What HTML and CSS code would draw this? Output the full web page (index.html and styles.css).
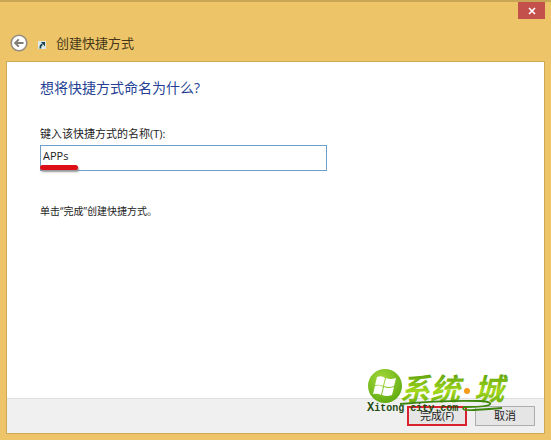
FILE: index.html
```html
<!DOCTYPE html>
<html lang="zh-CN">
<head>
  <meta charset="UTF-8">
  <meta name="viewport" content="width=device-width, initial-scale=1.0">
  <title>创建快捷方式</title>
  <link rel="stylesheet" href="styles.css">
</head>
<body>
  <form class="window">
    <div class="titlebar">
      <button type="button" class="close" aria-label="关闭">
        <svg width="8" height="8" viewBox="0 0 8 8"><path d="M1 1l6 6M7 1L1 7" stroke="#fff" stroke-width="1.6"/></svg>
      </button>
    </div>

    <header class="header">
      <button type="button" class="back" aria-label="返回">
        <svg width="18" height="18" viewBox="0 0 18 18">
          <circle cx="9" cy="9" r="7.8" fill="#fff" stroke="#948d80" stroke-width="1.6"/>
          <path d="M13.5 9H5.5M8.8 5.4L5.2 9l3.6 3.6" fill="none" stroke="#807d77" stroke-width="2"/>
        </svg>
      </button>
      <svg class="shortcut" width="8" height="8" viewBox="0 0 8 8">
        <rect width="8" height="8" fill="#dfe8e8"/>
        <path d="M2.5 7.5C2 5 3 3.5 4.5 3.500" fill="none" stroke="#17414f" stroke-width="1.800"/>
        <path d="M3 1H7v4.500z" fill="#17414f"/>
      </svg>
      <span class="title">创建快捷方式</span>
    </header>

    <main class="panel">
      <div class="content">
        <h1>想将快捷方式命名为什么?</h1>
        <label for="name">键入该快捷方式的名称(T):</label>
        <div class="field">
          <input type="text" id="name" value="APPs">
          <span class="marker"></span>
        </div>
        <p>单击“完成”创建快捷方式。</p>
      </div>

      <footer class="footer">
        <button type="submit" class="btn finish">完成(F)</button>
        <button type="button" class="btn">取消</button>
        <!-- Logo -->
        <svg class="logo" width="146" height="52" viewBox="0 0 146 52">
          <defs>
            <linearGradient id="green" x1="0" y1="0" x2="0" y2="1">
              <stop offset="0.2" stop-color="#5fa30c"/>
              <stop offset="0.6" stop-color="#a4d81c"/>
              <stop offset="1" stop-color="#4f980a"/>
            </linearGradient>
            <radialGradient id="ball" cx="0.4" cy="0.3" r="0.7">
              <stop offset="0" stop-color="#a5d93b"/>
              <stop offset="1" stop-color="#62ad12"/>
            </radialGradient>
          </defs>
          <circle cx="21" cy="20" r="17" fill="url(#ball)"/>
          <path d="M13 11q5-2 8 1l-2 8q-3-2-8-1zM22 12q4 2 10 0l-2 8q-5 2-10 0zM11 20q5-2 8 1l-2 8q-3-2-8-1zM20 21q4 2 10 0l-2 8q-5 2-10 0z" fill="#fff"/>
          <g class="logo-name">
            <text x="36" y="34">系</text>
            <text x="66" y="34">统</text>
            <text x="110" y="34">城</text>
          </g>
          <circle cx="103" cy="25" r="3" fill="#f59a18"/>
          <path d="M36 38Q80 34 116 35Q130 36 125 39Q120 41 100 41Q96 45 110 44Q126 43 138 42" fill="none" stroke="#3c860e" stroke-width="1.8"/>
          <text class="logo-url" x="3" y="45"><tspan class="logo-cap">X</tspan>itong city.com</text>
        </svg>
      </footer>
    </main>
  </form>
</body>
</html>
```
FILE: styles.css
```css
* {
  box-sizing: border-box;
}
body {
  margin: 0;
  font-family: "Open Sans", "Noto Sans CJK SC", sans-serif;
  font-size: 11px;
  line-height: 16px;
  color: #222;
}
button, input {
  font: inherit;
  color: inherit;
}
.window {
  display: flex;
  flex-direction: column;
  min-height: 100vh;
  padding: 0 6px 6px;
  background-color: #edc568;
  border-top: 2px solid #c9a655;
}
.titlebar {
  display: flex;
  justify-content: flex-end;
  height: 31px;
}
.close {
  display: flex;
  align-items: center;
  justify-content: center;
  width: 27px;
  height: 17px;
  padding: 0;
  border: 0;
  background-color: #c4504c;
}
.header {
  display: flex;
  align-items: center;
  height: 20px;
  margin-bottom: 8px;
  padding-left: 4px;
}
.back {
  display: flex;
  padding: 0;
  border: 0;
  background: none;
}
.shortcut {
  margin: 4px 10px 0 10px;
}
.title {
  font-size: 13px;
  color: #453718;
}
.panel {
  flex: 1;
  display: flex;
  flex-direction: column;
  background-color: #fff;
  border: 1px solid #cda955;
}
.content {
  flex: 1;
  padding: 16px 33px;
}
h1 {
  margin: 0 0 28px;
  font-size: 14px;
  font-weight: normal;
  line-height: 20px;
  color: #253f94;
}
label {
  display: block;
  margin-bottom: 3px;
}
.field {
  position: relative;
  width: 61%;
  margin-bottom: 32px;
}
input {
  display: block;
  width: 100%;
  height: 26px;
  padding: 0 2px 6px;
  border: 1px solid #6f9fc9;
  outline: none;
}
.marker {
  position: absolute;
  left: 0;
  bottom: 1px;
  width: 38px;
  height: 5px;
  border-radius: 3px;
  background-color: #dc1016;
  box-shadow: 1px 2px 2px #999;
}
p {
  margin: 0;
  font-size: 10px;
}
.footer {
  position: relative;
  display: flex;
  justify-content: flex-end;
  gap: 8px;
  padding: 7px 9px;
  background-color: #f0f0f0;
  border-top: 1px solid #dfdfdf;
}
.btn {
  width: 60px;
  height: 20px;
  padding: 0;
  border: 1px solid #adadad;
  background-color: #e5e5e5;
  line-height: 16px;
}
.finish {
  border: 2px solid #d8232e;
}
.logo {
  position: absolute;
  right: 34px;
  bottom: 15px;
}
.logo-name {
  font-family: "Noto Sans CJK SC", sans-serif;
  font-size: 30px;
  font-style: italic;
  font-weight: bold;
  fill: url(#green);
}
.logo-url {
  font-family: "Liberation Mono", monospace;
  font-size: 10px;
  font-weight: bold;
  fill: #234d10;
}
.logo-cap {
  font-size: 12px;
}
```
